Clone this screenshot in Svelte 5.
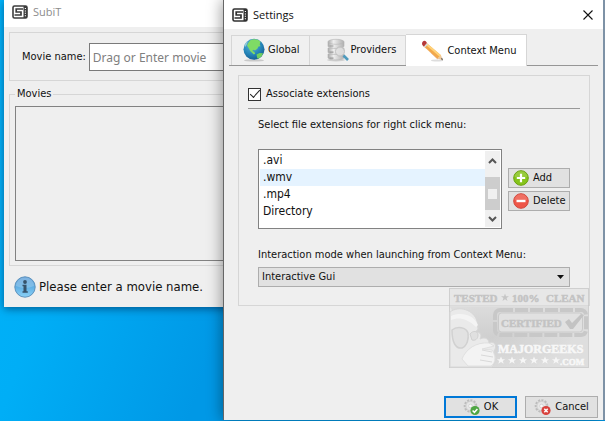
<script>
  let movie = $state('');
  let tab = $state('Context Menu');
  let associate = $state(true);
  let current = $state('.wmv');
  let mode = $state('Interactive Gui');
  const tabs = ['Global', 'Providers', 'Context Menu'];
  const extensions = ['.avi', '.wmv', '.mp4', 'Directory'];
  const stars = [52, 63, 74, 85, 96, 107];
</script>

{#snippet logo(color)}
  <svg class="logo" width="16" height="14" viewBox="0 0 16 14" aria-hidden="true">
    <rect x="1" y="1" width="14" height="12" rx="1.5" fill="#fff" stroke={color} stroke-width="1.6" />
    <path d="M11 4H4.200v3H9v3H2.500" fill="none" stroke={color} stroke-width="1.700" />
    <path d="M11.500 1H15v12h-3.500z" fill={color} />
    <path d="M13.400 3v9" stroke="#fff" stroke-width="1.200" stroke-dasharray="1 1.400" />
  </svg>
{/snippet}

{#snippet gear()}
  <circle cx="7.5" cy="8" r="5.6" fill="#dedede" stroke="#bcbcbc" stroke-width="2.4" stroke-dasharray="2 1.2" />
  <circle cx="7.5" cy="8" r="4.6" fill="#e6e6e6" stroke="#cfcfcf" />
  <circle cx="7.5" cy="8" r="1.8" fill="#fafafa" stroke="#c4c4c4" stroke-width=".6" />
{/snippet}

<div class="desktop">
  <main class="window subit">
    <header class="titlebar muted">{@render logo('#3c3c3c')}<span>SubiT</span></header>
    <div class="content">
      <div class="box search">
        <label for="movie">Movie name:</label>
        <input id="movie" type="text" placeholder="Drag or Enter movie" bind:value={movie} />
      </div>
      <fieldset class="movies">
        <legend>Movies</legend>
        <div class="results"></div>
      </fieldset>
    </div>
    <footer class="status">
      <svg width="22" height="22" viewBox="0 0 22 22" aria-hidden="true">
        <defs>
          <linearGradient id="info" x1="0" y1="0" x2="0" y2="1">
            <stop offset="0" stop-color="#5f9fd8" /><stop offset=".5" stop-color="#60afe4" /><stop offset="1" stop-color="#8bd2f7" />
          </linearGradient>
        </defs>
        <circle cx="11" cy="11" r="10.2" fill="url(#info)" stroke="#5d92bd" stroke-width="1" />
        <path d="M2 10a9 8.5 0 0 1 18 0q-9 4-18 0z" fill="#fff" opacity=".2" />
        <circle cx="11" cy="6" r="1.900" fill="#36536b" />
        <path d="M8.500 8.800h4v6.500h1.300v1.500H8.500v-1.500h1v-5h-1z" fill="#36536b" />
      </svg>
      <span>Please enter a movie name.</span>
    </footer>
  </main>

  <section class="window settings" aria-label="Settings">
    <header class="titlebar">
      {@render logo('#303030')}<span>Settings</span>
      <button class="close" aria-label="Close">
        <svg width="10" height="10" viewBox="0 0 10 10"><path d="M.5.5l9 9m0-9l-9 9" stroke="#111" stroke-width="1.1" /></svg>
      </button>
    </header>

    <div class="tabs" role="tablist">
      {#each tabs as name}
        <button class="tab" role="tab" aria-selected={tab === name} class:active={tab === name} onclick={() => (tab = name)}>
          {#if name === 'Global'}
            <svg width="24" height="24" viewBox="0 0 24 24" aria-hidden="true">
              <defs>
                <radialGradient id="sea" cx=".4" cy=".3" r=".75">
                  <stop offset="0" stop-color="#5eb4dc" /><stop offset=".6" stop-color="#2585b8" /><stop offset="1" stop-color="#14598e" />
                </radialGradient>
              </defs>
              <ellipse cx="12" cy="22.4" rx="10" ry="1.2" fill="#c9c9c9" />
              <circle cx="12" cy="11.3" r="10.5" fill="url(#sea)" />
              <path d="M8 2.5C10 1 14 .8 16 1.7l2.5 2-.8 2.6.8 2-2 .2-1.2 2.2-2.3 1.8-1.3-.7-1.5 1.2 2 .8 1 2-1.4.6-3.6-3.4-1.6-3L5 7.500 6.200 5z" fill="#7fdb65" />
              <path d="M14.500 16.500l3-1.500 3.500.2-1.200 2.800-2.500 2.300-2 .2z" fill="#70cf60" />
              <path d="M2.500 7l1.800-3 1.500-.8L5 6l-1.500 3z" fill="#8ecad8" />
            </svg>
          {:else if name === 'Providers'}
            <svg width="24" height="24" viewBox="0 0 24 24" aria-hidden="true">
              <defs>
                <linearGradient id="disk"><stop offset="0" stop-color="#aaa" /><stop offset=".35" stop-color="#eee" /><stop offset="1" stop-color="#b0b0b0" /></linearGradient>
              </defs>
              <ellipse cx="11" cy="22" rx="9" ry="1.500" fill="#d0d0d0" />
              <g fill="url(#disk)" stroke="#b3b3b3" stroke-width=".6">
                <path d="M3 16v4c2 2.500 14 2.500 16 0v-4z" />
                <path d="M3 10v4.500c2 2.500 14 2.500 16 0V10z" />
                <path d="M3 4v4.500c2 2.500 14 2.500 16 0V4z" />
                <ellipse cx="11" cy="3.800" rx="8" ry="2.500" />
              </g>
              <path d="M4.500 8h4m-4 6.200h4m-4 6h4" stroke="#999" stroke-width="1.200" />
              <circle cx="15" cy="13.500" r="4.500" fill="#e4e4e4" opacity=".8" stroke="#bbb" />
              <path d="M18.500 17.500l4.500 4.500" stroke="#4d9abd" stroke-width="2.600" />
            </svg>
          {:else}
            <svg width="24" height="24" viewBox="0 0 24 24" aria-hidden="true">
              <ellipse cx="16" cy="21.500" rx="6" ry="1" fill="#ddd" />
              <path d="M5 3.500L2 6.800l14.500 13 3.500-3.500z" fill="#f2a84b" />
              <path d="M5 3.500L3.800 4.900l14.900 12.800 1.300-1.400z" fill="#ffd37a" />
              <path d="M3.200 8l14 12.200-.9-.1L2 6.800z" fill="#d9792d" />
              <path d="M16.500 19.800l3.500-3.500 1.800 5z" fill="#ecc79b" />
              <path d="M20 20l1.100-1.200.9 2.800z" fill="#444" />
              <path d="M7 5.200L4 8.500l-1.200-1L5.800 4z" fill="#d5d8dc" />
              <path d="M5.800 4L2.800 7.500C0 6 .8 1.800 3.500 1.800 4.700 1.800 5.500 3 5.800 4z" fill="#b5373a" />
            </svg>
          {/if}
          <span>{name}</span>
        </button>
      {/each}
    </div>

    <div class="panel" role="tabpanel">
      <label class="check"><input type="checkbox" bind:checked={associate} /><span>Associate extensions</span></label>
      <hr />
      <div class="form">
        <div class="caption" id="ext-label">Select file extensions for right click menu:</div>
        <div class="row">
          <div class="list">
            <ul role="listbox" aria-labelledby="ext-label">
              {#each extensions as ext}
                <li role="option" aria-selected={current === ext} class:hot={current === ext}>{ext}</li>
              {/each}
            </ul>
            <div class="scroll" aria-hidden="true">
              <svg width="9" height="6" viewBox="0 0 9 6"><path d="M1 5l3.500-3.500L8 5" fill="none" stroke="#555" stroke-width="2" /></svg>
              <div class="thumb"><i></i></div>
              <svg width="9" height="6" viewBox="0 0 9 6"><path d="M1 1l3.500 3.500L8 1" fill="none" stroke="#555" stroke-width="2" /></svg>
            </div>
          </div>
          <div class="actions">
            <button class="btn small">
              <svg width="16" height="16" viewBox="0 0 16 16" aria-hidden="true">
                <circle cx="8" cy="8" r="7.300" fill="#86c41b" stroke="#6ba10f" /><path d="M1.500 7a6.500 6 0 0 1 13 0z" fill="#fff" opacity=".15" />
                <path d="M8 3.800v8.400M3.800 8h8.400" stroke="#fff" stroke-width="2.200" />
              </svg>
              <span>Add</span>
            </button>
            <button class="btn small">
              <svg width="16" height="16" viewBox="0 0 16 16" aria-hidden="true">
                <circle cx="8" cy="8" r="7.300" fill="#ee5648" stroke="#d2483d" /><path d="M1.500 7a6.500 6 0 0 1 13 0z" fill="#fff" opacity=".15" />
                <path d="M3.500 8h9" stroke="#fff" stroke-width="2.400" />
              </svg>
              <span>Delete</span>
            </button>
          </div>
        </div>
        <label class="caption second" for="mode">Interaction mode when launching from Context Menu:</label>
        <div class="combo">
          <select id="mode" bind:value={mode}><option>Interactive Gui</option></select>
          <svg width="7" height="4" viewBox="0 0 7 4" aria-hidden="true"><path d="M0 0h7L3.500 4z" fill="#111" /></svg>
        </div>
      </div>
      <svg class="stamp" width="140" height="80" viewBox="0 0 140 80" role="img" aria-label="Tested 100% clean, certified by MajorGeeks.com">
        <defs>
          <radialGradient id="glow" cx=".3" cy=".5" r=".6"><stop offset="0" stop-color="#c8c8c8" /><stop offset="1" stop-color="#dadada" /></radialGradient>
        </defs>
        <rect x=".5" y=".5" width="139" height="79" fill="#e6e6e6" stroke="#c8c8c8" />
        <path d="M1 19h138v60H40z" fill="url(#glow)" />
        <path d="M1 18h138" stroke="#d2d2d2" />
        <g class="lettering" font-size="11" fill="#b9b9b9" stroke="#b9b9b9" stroke-width=".5">
          <text x="5" y="14">TESTED</text>
          <text x="63" y="14">100%</text>
          <text x="97" y="14">CLEAN</text>
        </g>
        <path d="M56 5.500l1 2.800h3l-2.400 1.800.9 2.900-2.500-1.700-2.500 1.700.9-2.900L52 8.300h3z" fill="#bdbdbd" />
        <rect x="46" y="22" width="91" height="25" rx="5" fill="none" stroke="#bfbfbf" stroke-width="4" stroke-dasharray="13 2" />
        <rect x="49.500" y="25" width="84" height="19" rx="3" fill="#dedede" stroke="#c2c2c2" />
        <text class="lettering" x="52" y="39" font-size="11" fill="#b9b9b9" stroke="#b9b9b9" stroke-width=".5">CERTIFIED</text>
        <path d="M116 34l4-3 3 4 9-9 3 1-11 14h-3z" fill="#b9b9b9" />
        <path d="M1 24c9-7 24-2 27 9l1 8-4 5c4-4 9 0 6 5 6-3 9 1 9 4 5-3 9 3 5 8l1 4c2 3 0 8-3 12H1z" fill="#e9e9e9" stroke="#d2d2d2" />
        <path d="M2 32c7-3 16-2 25 7l2-2C24 26 12 24 2 28z" fill="#f6f6f6" />
        <path d="M3 42c5-4 14-3 16 3 1 6-1 13-6 15-6 1-10-5-10-18z" fill="#e0e0e0" stroke="#cacaca" stroke-width="1.500" />
        <path d="M21 46c3-4 8-3 8 1s-3 6-6 5z" fill="#ddd" stroke="#cacaca" />
        <path d="M13 71c4-10 14-17 27-16l5 3-12 3 10 1c3 4 5 12-1 16H19z" fill="#f5f5f5" stroke="#d6d6d6" stroke-width=".7" />
        <path d="M33 62l10 2M32 67l12 2M31 72l12 2" stroke="#d4d4d4" />
        <g class="lettering" fill="#fafafa" stroke="#fafafa" stroke-width=".5">
          <text x="49" y="65" font-size="12">MAJORGEEKS</text>
          <text x="111" y="77" font-size="9">.COM</text>
        </g>
        {#each stars as x}
          <path d="M{x} 68.500l1.200 2.700h2.900l-2.300 1.800.9 2.800-2.700-1.700-2.700 1.700.9-2.800-2.300-1.800h2.900z" fill="#f8f8f8" />
        {/each}
      </svg>
    </div>

    <footer class="dialog-buttons">
      <button class="btn big default">
        <svg width="18" height="18" viewBox="0 0 18 18" aria-hidden="true">{@render gear()}<circle cx="12" cy="12.500" r="4.600" fill="#4fa744" /><path d="M9.600 12.500l1.800 1.800 3-3.300" fill="none" stroke="#fff" stroke-width="1.500" /></svg>
        <span>OK</span>
      </button>
      <button class="btn big">
        <svg width="18" height="18" viewBox="0 0 18 18" aria-hidden="true">{@render gear()}<circle cx="12" cy="12.500" r="4.600" fill="#d9423d" /><path d="M10.300 10.800l3.400 3.400m0-3.400l-3.400 3.400" stroke="#fff" stroke-width="1.500" /></svg>
        <span>Cancel</span>
      </button>
    </footer>
  </section>
</div>

<style>
  :global(body) { margin: 0; }
  .desktop {
    position: relative;
    min-height: 100vh;
    overflow: hidden;
    background: linear-gradient(110deg, #00b4fa 0%, #00aef6 20%, #0098e6 45%);
    font: 11px/16px 'DejaVu Sans Condensed', 'DejaVu Sans', sans-serif;
    color: #111;
  }
  .desktop *, .desktop *::before, .desktop *::after { box-sizing: border-box; }
  button, input, select { font: inherit; color: inherit; margin: 0; }
  svg { display: block; flex: none; }
  .window { position: absolute; top: 0; background: #efefef; }
  .subit { left: 4px; right: 40px; box-shadow: 0 2px 8px rgba(0, 30, 70, 0.55); }
  .settings {
    left: 224px; right: 0; bottom: 1px;
    display: flex; flex-direction: column;
    border-right: 2px solid #7e92a6;
    box-shadow: -1px 0 0 #666, -2px 0 14px rgba(0, 0, 0, 0.4);
  }
  .titlebar {
    display: flex; align-items: center; gap: 5px; flex: none;
    height: 29px; padding: 0 8px; background: #fff;
    font-family: 'Open Sans', 'Noto Sans', sans-serif;
  }
  .titlebar.muted { height: 27px; padding-bottom: 4px; color: #8c8c8c; }
  .close { margin-left: auto; padding: 0; width: 12px; height: 12px; border: 0; background: none; }

  .content { padding: 5px 5px 0; display: flex; flex-direction: column; gap: 5px; }
  .box { border: 1px solid #d6d6d6; }
  .search { display: flex; align-items: center; gap: 3px; padding: 10px 12px 9px; }
  .search input { flex: 1; min-width: 0; height: 28px; padding: 0 3px; border: 1px solid #7a7a7a; background: #fff; font-family: 'Noto Sans', sans-serif; font-size: 12px; }
  .search input::placeholder { color: #808080; opacity: 1; }
  .movies { margin: 0; border: 1px solid #d6d6d6; padding: 4px 5px; min-width: 0; }
  .movies legend { padding: 0 2px; }
  .results { height: 155px; border: 1px solid #828282; }
  .status { display: flex; align-items: center; gap: 3px; height: 41px; padding: 0 10px; font-size: 13px; }

  .tabs { display: flex; align-items: flex-end; height: 37px; margin: 0 5px; padding: 0 2px; border-bottom: 1px solid #969696; flex: none; }
  .tab { display: flex; align-items: center; gap: 2px; height: 30px; padding: 0 9px 1px 10px; border: 1px solid #d6d6d6; border-bottom: 0; background: #f0f0f0; white-space: nowrap; }
  .tab + .tab { border-left: 0; padding-left: 15px; }
  .tab.active { height: 32px; padding-bottom: 0; margin-bottom: -1px; background: #fff; }

  .panel { position: relative; margin: 9px 13px 0 14px; padding: 10px 9px 18px; border: 1px solid #d6d6d6; }
  .check { display: flex; align-items: center; gap: 5px; }
  .check input { appearance: none; display: grid; place-items: center; width: 13px; height: 13px; border: 1px solid #333; background: #fff; }
  .check input:checked::after { content: ''; width: 10px; height: 5px; border: solid #222; border-width: 0 0 1px 1px; transform: translateY(-2px) rotate(-48deg); }
  hr { height: 1px; margin: 6px 0 0; border: 0; background: #999; }
  .form { padding: 8px 10px 0; }
  .caption { display: block; }
  .row { display: flex; align-items: center; gap: 6px; margin-top: 16px; }
  .list { display: flex; flex: 1; height: 80px; padding: 1px; border: 1px solid #828282; background: #fff; font-size: 12px; }
  ul { flex: 1; list-style: none; margin: 0; padding: 1px 0 0; }
  li { height: 17px; padding: 0 3px; line-height: 17px; }
  li.hot { background: #e5f3ff; }
  .scroll { width: 15px; display: flex; flex-direction: column; align-items: center; padding: 7px 0 5px; background: #f0f0f0; }
  .thumb { width: 100%; height: 33px; margin: 13px 0 6px; display: grid; place-items: center; background: #cdcdcd; }
  .thumb i { width: 9px; height: 10px; background: #f0f0f0; }
  .actions { display: flex; flex-direction: column; gap: 3px; }
  .btn { display: flex; align-items: center; border: 1px solid #adadad; background: #e1e1e1; white-space: nowrap; }
  .small { width: 62px; height: 20px; gap: 4px; padding: 0 4px; }
  .second { margin-top: 18px; }
  .combo { position: relative; margin-top: 4px; }
  .combo select { appearance: none; display: block; width: 100%; height: 20px; padding: 0 3px; border: 1px solid #adadad; border-radius: 0; background: #e1e1e1; }
  .combo svg { position: absolute; right: 6px; top: 8px; }
  .stamp { position: absolute; right: 0; top: 212px; opacity: 0.8; }
  .lettering { font-family: 'Liberation Serif', serif; font-weight: 700; }

  .dialog-buttons { display: flex; justify-content: flex-end; gap: 8px; margin-top: auto; padding: 0 5px 2px; }
  .big { width: 73px; height: 22px; gap: 3px; justify-content: center; padding: 0; }
  .default { border: 2px solid #0078d7; }
</style>
